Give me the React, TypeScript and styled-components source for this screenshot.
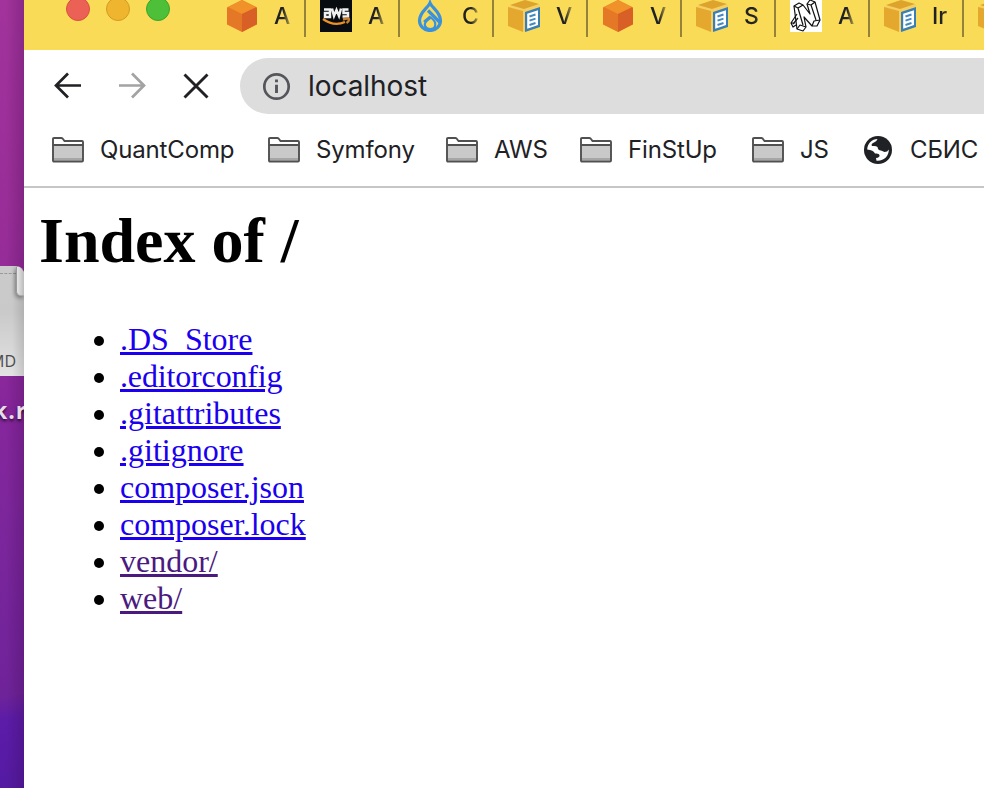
import React from "react";
import styled, { createGlobalStyle } from "styled-components";

const GlobalStyle = createGlobalStyle`
  * { box-sizing: border-box; }
  html, body { margin: 0; padding: 0; overflow: hidden; }
`;

const Screen = styled.div`
  display: flex;
  width: 984px;
  height: 788px;
  overflow: hidden;
  font-family: Inter, "Liberation Sans", sans-serif;
  color: #202124;
`;

const Desktop = styled.div`
  flex: none;
  width: 24px;
  padding-top: 266px;
  overflow: hidden;
  background:
    linear-gradient(90deg, rgba(40, 0, 50, 0) 25%, rgba(40, 0, 50, 0.2) 100%),
    linear-gradient(172deg, #a2339c 0%, #982d98 30%, #86269c 52%, #7d269c 65%, #6f2399 88%, #5c1ca8 91%, #541aa2 100%);
`;

const Thumbnail = styled.div`
  position: relative;
  display: flex;
  align-items: flex-end;
  height: 110px;
  padding-bottom: 6px;
  border-top-right-radius: 8px;
  background:
    linear-gradient(90deg, rgba(0, 0, 0, 0) 50%, rgba(0, 0, 0, 0.12) 100%),
    linear-gradient(180deg, #cbcbcb 0%, #c9c9c9 40%, #e2e2e2 100%);
`;

const DashedLine = styled.div`
  position: absolute;
  top: 7px;
  left: 0;
  width: 16px;
  border-top: 1px dashed #999;
`;

const Fold = styled.div`
  position: absolute;
  top: 1px;
  right: 0;
  width: 8px;
  height: 29px;
  border-left: 1px solid #999;
  border-bottom: 1px solid #aaa;
  border-bottom-left-radius: 5px;
  background: linear-gradient(90deg, #e8e8e8, #bbb);
  box-shadow: -1px 2px 4px rgba(0, 0, 0, 0.4);
  clip-path: polygon(-8px -2px, 2px -2px, 100% 5px, 100% 40px, -8px 40px);
`;

const ThumbnailKind = styled.span`
  display: block;
  margin-left: -10px;
  font: 500 16px/18px "Open Sans", sans-serif;
  color: #4b4b4b;
`;

const FileName = styled.div`
  margin: 20px 0 0 -7px;
  white-space: nowrap;
  font: bold 23px/28px "Open Sans", sans-serif;
  letter-spacing: 1px;
  color: #e6dcea;
  text-shadow: 0 2px 3px rgba(0, 0, 0, 0.7);
`;

const BrowserWindow = styled.div`
  flex: none;
  display: flex;
  flex-direction: column;
  width: 960px;
  background: #fff;
  overflow: hidden;
`;

const TabStrip = styled.div`
  display: flex;
  flex: none;
  height: 50px;
  background: #f9db57;
`;

const TrafficLights = styled.div`
  display: flex;
  flex: none;
  gap: 16px;
  width: 188px;
  margin-top: -3px;
  padding-left: 42px;
`;

const Light = styled.span<{ $fill: string; $edge: string }>`
  width: 24px;
  height: 24px;
  border-radius: 50%;
  background: ${(p) => p.$fill};
  border: 1px solid ${(p) => p.$edge};
`;

const Tab = styled.div`
  display: flex;
  flex: none;
  gap: 16px;
  width: 94px;
  height: 37px;
  padding-left: 14px;
  border-right: 2px solid #95833b;
`;

const TabTitle = styled.span<{ $solid?: boolean }>`
  width: 18px;
  overflow: hidden;
  white-space: nowrap;
  font-size: 23px;
  font-weight: 450;
  line-height: 32px;
  mask-image: linear-gradient(90deg, #000 50%, rgba(0, 0, 0, ${(p) => (p.$solid ? 0.8 : 0.3)}) 90%);
`;

const Toolbar = styled.div`
  display: flex;
  flex: none;
  height: 72px;
  padding: 8px 0 0 28px;
`;

const NavButton = styled.span<{ $color: string }>`
  display: flex;
  flex: none;
  align-items: center;
  width: 64px;
  height: 56px;
  color: ${(p) => p.$color};
`;

const AddressBar = styled.div`
  display: flex;
  align-items: center;
  flex: none;
  gap: 17px;
  width: 780px;
  height: 56px;
  margin-left: -4px;
  padding-left: 22px;
  border-radius: 28px;
  background: #dddddd;
`;

const Address = styled.span`
  font-size: 28px;
  line-height: 32px;
  letter-spacing: -0.05px;
`;

const BookmarkBar = styled.div`
  display: flex;
  flex: none;
  height: 66px;
  padding: 12px 0 0 28px;
  border-bottom: 2px solid #c6c6c6;
`;

const Bookmark = styled.div<{ $width: number }>`
  display: flex;
  align-items: center;
  flex: none;
  gap: 16px;
  width: ${(p) => p.$width}px;
  height: 32px;
  white-space: nowrap;
  font-size: 24px;
  font-weight: 430;
  line-height: 32px;
  letter-spacing: -0.15px;

  svg { flex: none; }
`;

const Listing = styled.main`
  padding: 0 16px;
  font-family: "Liberation Serif", serif;
  font-size: 32px;
  line-height: 37px;
  color: #000;
`;

const Heading = styled.h1`
  margin: 16px 0 43px -1px;
  font-size: 64px;
  line-height: 74px;
  font-weight: bold;
`;

const FileList = styled.ul`
  margin: 0;
  padding: 0;
`;

const FileRow = styled.li`
  display: flex;
  align-items: center;
  height: 37px;
  padding-left: 54px;

  &::before {
    content: "";
    width: 10px;
    height: 10px;
    margin: 2px 16px 0 0;
    border-radius: 50%;
    background: #000;
  }
`;

const FileLink = styled.a<{ $visited?: boolean; $tracking?: number }>`
  color: ${(p) => (p.$visited ? "#4b1a80" : "#1a00ee")};
  letter-spacing: ${(p) => p.$tracking ?? 0}px;
  text-decoration: underline;
  text-decoration-thickness: 3px;
  text-underline-offset: 2px;
`;

const CubeIcon = () => (
  <svg width="32" height="32" viewBox="0 0 32 32">
    <path d="M16 0 31 7.500V24.500L16 32 1 24.500V7.500Z" fill="#e47827" />
    <path d="M16 0 30 7 16 14 2 7Z" fill="#f09129" />
    <path d="M16 14 30 7.500 31 9V24L16 32Z" fill="#d85f25" />
  </svg>
);

const AwsIcon = () => (
  <svg width="32" height="32" viewBox="0 0 32 32">
    <path fill="#080c10" d="M0 0H32V32H0Z" />
    <g fill="none" stroke="#f1f1f1" strokeWidth="2.500">
      <path d="M4 9.500H10V17H5V13H10M12 8.500 14 16 16.500 10 19 16 21 8.500M28.500 9.500H23.500V13H28V16.500H22.500" />
    </g>
    <path d="M3 19Q14 27 25 22" fill="none" stroke="#e99127" strokeWidth="2.200" />
    <path d="M23 19.500Q29 17.500 29 19.500T26.500 23" fill="none" stroke="#c98028" strokeWidth="2.400" />
  </svg>
);

const DropIcon = () => (
  <svg width="32" height="32" viewBox="0 0 32 32" fill="none" stroke="#3a91dc" strokeWidth="3.200">
    <path d="M16 3C14 8 5.500 12 5.500 20.500A10.500 10 0 0 0 26.500 20.500C26.500 12 18 8 16 3Z" />
    <path d="M14 10.500 26 22.500" />
    <path d="M16.500 16.500 10 22" strokeWidth="2.800" />
    <path d="M17 17.500C21.500 21 22 23.500 21 26.500C19.500 30 12.500 30 11 26C10 23 12 20.500 17 17.500Z" strokeWidth="2.200" />
  </svg>
);

const BoxDocIcon = () => (
  <svg width="32" height="32" viewBox="0 0 32 32">
    <path d="M0 7 17 0 32 5V26L17 32 0 25Z" fill="#f5cf62" />
    <path d="M2 5 17 0 31 4 16 9Z" fill="#dda32d" />
    <path d="M0 7 15 11V32L0 26Z" fill="#e4a82e" />
    <path d="M17 12 32 7V27L17 32Z" fill="#397fb5" />
    <path d="M19.200 13.700 30 10.200V25L19.200 28.800Z" fill="#fff" />
    <path d="m21.500 16.500 6-2M21.500 20.700l6-2M21.500 25l6-2" stroke="#4389c0" strokeWidth="1.900" />
  </svg>
);

const SketchIcon = () => (
  <svg width="32" height="32" viewBox="0 0 32 32">
    <path fill="#fff" d="M0 0H32V32H0Z" />
    <g fill="none" stroke="#111" strokeWidth="1.200" strokeLinejoin="round">
      <path d="M4 6 9 3 13 5 20 14 17 4 20 0 25 2 30 20 27 26 22 26 14 17 16 27 13 31 7 29Z" />
      <path d="M4 6 8 8 13 5M8 8 13 25M17 4 21 5 25 2M21 5 26 20M7 29 10 25 16 27M22 26 24 21 30 20M7 14 1 23 3 27 6 25M3 24 8 18M1 23 5 23" />
    </g>
  </svg>
);

const FolderIcon = () => (
  <svg width="32" height="26" viewBox="0 0 32 26">
    <path d="M1 8H31V23Q31 24 30 24H2Q1 24 1 23Z" fill="#c9c9c9" />
    <path d="M2 22H30" stroke="#a6a6a6" strokeWidth="2" />
    <path d="M1 8V2Q1 1 2 1H9.500Q10.500 1 11 2L12.500 4H30Q31 4 31 5V23.500Q31 24.500 30 24.500H2Q1 24.500 1 23.500V8H31" fill="none" stroke="#505050" strokeWidth="1.900" />
  </svg>
);

const GlobeIcon = () => (
  <svg width="30" height="30" viewBox="0 0 30 30">
    <circle cx="14" cy="15" r="14" fill="#202124" />
    <path d="M3.200 14.500C3.500 8.500 8 4 13.500 4Q12.500 7 10 7.500 6.500 9 8 11Q12 10.500 13.500 12 14 15.500 17 15.500L20.500 17Q23.500 17 24.800 14.500C25 21 20 26.300 12.500 25.700L12 23Q16 22.500 15.500 20 15 18 11 18.500 9.500 15 3.200 14.500Z" fill="#fff" />
  </svg>
);

const tabs = [
  { icon: <CubeIcon />, title: "A" },
  { icon: <AwsIcon />, title: "A" },
  { icon: <DropIcon />, title: "C" },
  { icon: <BoxDocIcon />, title: "V" },
  { icon: <CubeIcon />, title: "V" },
  { icon: <BoxDocIcon />, title: "S", solid: true },
  { icon: <SketchIcon />, title: "A" },
  { icon: <BoxDocIcon />, title: "Ir", solid: true },
  { icon: <BoxDocIcon />, title: "" },
];

const folders = [
  { name: "QuantComp", width: 216 },
  { name: "Symfony", width: 178 },
  { name: "AWS", width: 134 },
  { name: "FinStUp", width: 172 },
  { name: "JS", width: 112 },
];

const files = [
  { name: ".DS_Store" },
  { name: ".editorconfig", tracking: -0.15 },
  { name: ".gitattributes" },
  { name: ".gitignore" },
  { name: "composer.json" },
  { name: "composer.lock" },
  { name: "vendor/", visited: true },
  { name: "web/", visited: true },
];

export default function App() {
  return (
    <Screen>
      <GlobalStyle />
      <Desktop>
        <Thumbnail>
          <DashedLine />
          <Fold />
          <ThumbnailKind>MD</ThumbnailKind>
        </Thumbnail>
        <FileName>k.r</FileName>
      </Desktop>
      <BrowserWindow>
        <TabStrip>
          <TrafficLights>
            <Light $fill="#ec6155" $edge="#d9503f" />
            <Light $fill="#f0b52e" $edge="#d49b22" />
            <Light $fill="#4dbf38" $edge="#3aa62a" />
          </TrafficLights>
          {tabs.map((tab, i) => (
            <Tab key={i}>
              {tab.icon}
              <TabTitle $solid={tab.solid}>{tab.title}</TabTitle>
            </Tab>
          ))}
        </TabStrip>
        <Toolbar>
          <NavButton $color="#202124">
            <svg width="32" height="32" viewBox="0 0 32 32" fill="none" stroke="currentColor" strokeWidth="2.700">
              <path d="M29 15.500H4.500M16 3.500 4 15.500 16 27.500" />
            </svg>
          </NavButton>
          <NavButton $color="#a3a3a3">
            <svg width="32" height="32" viewBox="0 0 32 32" fill="none" stroke="currentColor" strokeWidth="2.700">
              <path d="M3 15.500H27.500M16 3.500 28 15.500 16 27.500" />
            </svg>
          </NavButton>
          <NavButton $color="#202124">
            <svg width="32" height="32" viewBox="0 0 32 32" fill="none" stroke="currentColor" strokeWidth="2.900">
              <path d="M4.500 4.500 27.500 27.500M27.500 4.500 4.500 27.500" />
            </svg>
          </NavButton>
          <AddressBar>
            <svg width="29" height="29" viewBox="0 0 29 29">
              <circle cx="14.500" cy="14.500" r="12.200" fill="none" stroke="#55555c" strokeWidth="2.700" />
              <path d="M14.500 7.500V10.200M14.500 12.800V21" stroke="#55555c" strokeWidth="2.900" />
            </svg>
            <Address>localhost</Address>
          </AddressBar>
        </Toolbar>
        <BookmarkBar>
          {folders.map((f) => (
            <Bookmark key={f.name} $width={f.width}>
              <FolderIcon />
              {f.name}
            </Bookmark>
          ))}
          <Bookmark $width={130}>
            <GlobeIcon />
            СБИС
          </Bookmark>
        </BookmarkBar>
        <Listing>
          <Heading>Index of /</Heading>
          <FileList>
            {files.map((f) => (
              <FileRow key={f.name}>
                <FileLink $visited={f.visited} $tracking={f.tracking}>{f.name}</FileLink>
              </FileRow>
            ))}
          </FileList>
        </Listing>
      </BrowserWindow>
    </Screen>
  );
}
